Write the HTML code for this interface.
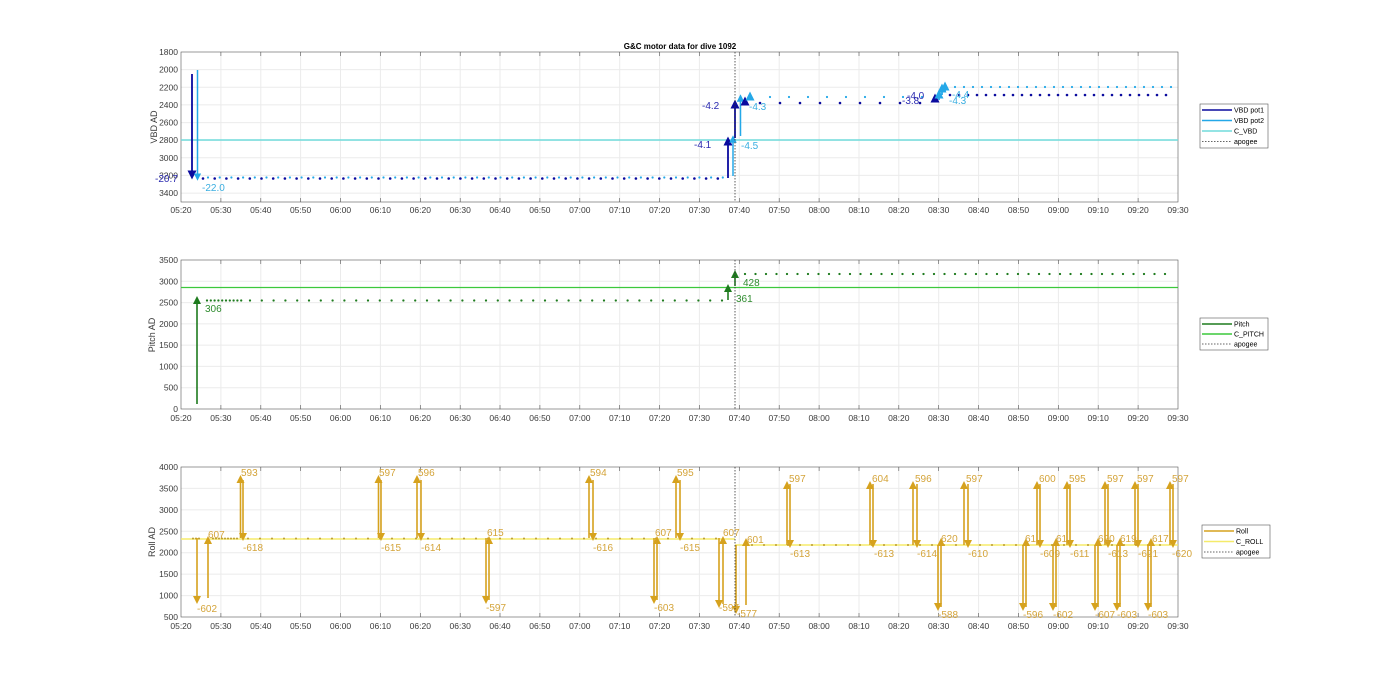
<!DOCTYPE html>
<html><head><meta charset="utf-8"><style>
html,body{margin:0;padding:0;background:#fff;width:1400px;height:693px;overflow:hidden}
svg{display:block;font-family:"Liberation Sans",Arial,sans-serif}
.t{font-size:8.5px;fill:#3a3a3a}
.tx text{text-anchor:middle}
.ty text{text-anchor:end}
.g{stroke:#ebebeb;stroke-width:1;fill:none}
.ax{stroke:#555;stroke-width:0.6;fill:none}
.lg{font-size:7px;fill:#000}
.rl{font-size:10px;fill:#D4A43A}
</style></head><body>
<svg width="1400" height="693" viewBox="0 0 1400 693">
<defs>
<path id="gx" d="M220.9 0V150M260.8 0V150M300.6 0V150M340.5 0V150M380.4 0V150M420.3 0V150M460.2 0V150M500 0V150M539.9 0V150M579.8 0V150M619.7 0V150M659.6 0V150M699.4 0V150M739.3 0V150M779.2 0V150M819.1 0V150M859 0V150M898.8 0V150M938.7 0V150M978.6 0V150M1018.5 0V150M1058.4 0V150M1098.2 0V150M1138.1 0V150"/>
<path id="tk" d="M220.9 0v-4M260.8 0v-4M300.6 0v-4M340.5 0v-4M380.4 0v-4M420.3 0v-4M460.2 0v-4M500 0v-4M539.9 0v-4M579.8 0v-4M619.7 0v-4M659.6 0v-4M699.4 0v-4M739.3 0v-4M779.2 0v-4M819.1 0v-4M859 0v-4M898.8 0v-4M938.7 0v-4M978.6 0v-4M1018.5 0v-4M1058.4 0v-4M1098.2 0v-4M1138.1 0v-4"/>
<marker id="mv1" markerWidth="5" markerHeight="5" refX="2.5" refY="2.5" orient="auto" markerUnits="strokeWidth"><path d="M0 0L5 2.5L0 5z" fill="#0A0A9E"/></marker>
<marker id="mv2" markerWidth="5" markerHeight="5" refX="2.5" refY="2.5" orient="auto" markerUnits="strokeWidth"><path d="M0 0L5 2.5L0 5z" fill="#24A8E8"/></marker>
<marker id="mp" markerWidth="5" markerHeight="5" refX="2.5" refY="2.5" orient="auto" markerUnits="strokeWidth"><path d="M0 0L5 2.5L0 5z" fill="#1E7B1E"/></marker>
<marker id="mr" markerWidth="5" markerHeight="5" refX="2.5" refY="2.5" orient="auto" markerUnits="strokeWidth"><path d="M0 0L5 2.5L0 5z" fill="#D6A21E"/></marker>
</defs>

<text x="680" y="49" text-anchor="middle" style="font-size:8px;font-weight:bold" fill="#000">G&amp;C motor data for dive 1092</text>

<!-- ============ TOP ============ -->
<g transform="translate(0,52)"><use href="#gx" class="g"/></g>
<path class="g" d="M181 69.6H1178M181 87.3H1178M181 104.9H1178M181 122.6H1178M181 140.2H1178M181 157.8H1178M181 175.4H1178M181 193.1H1178"/>
<rect x="181" y="52" width="997" height="150" class="ax"/>
<g transform="translate(0,202)"><use href="#tk" class="ax"/></g>
<g transform="translate(0,52) scale(1,-1)"><use href="#tk" class="ax"/></g>
<g class="t ty"><text x="178" y="55">1800</text><text x="178" y="72.6">2000</text><text x="178" y="90.3">2200</text><text x="178" y="107.9">2400</text><text x="178" y="125.6">2600</text><text x="178" y="143.2">2800</text><text x="178" y="160.8">3000</text><text x="178" y="178.4">3200</text><text x="178" y="196.1">3400</text></g>
<text transform="translate(157,127) rotate(-90)" text-anchor="middle" class="t" style="font-size:9px">VBD AD</text>
<g class="t tx" transform="translate(0,213)"><text x="181">05:20</text><text x="220.9">05:30</text><text x="260.8">05:40</text><text x="300.6">05:50</text><text x="340.5">06:00</text><text x="380.4">06:10</text><text x="420.3">06:20</text><text x="460.2">06:30</text><text x="500">06:40</text><text x="539.9">06:50</text><text x="579.8">07:00</text><text x="619.7">07:10</text><text x="659.6">07:20</text><text x="699.4">07:30</text><text x="739.3">07:40</text><text x="779.2">07:50</text><text x="819.1">08:00</text><text x="859">08:10</text><text x="898.8">08:20</text><text x="938.7">08:30</text><text x="978.6">08:40</text><text x="1018.5">08:50</text><text x="1058.4">09:00</text><text x="1098.2">09:10</text><text x="1138.1">09:20</text><text x="1178">09:30</text></g>
<line x1="181" y1="140" x2="1178" y2="140" stroke="#70DCDC" stroke-width="1.6"/>
<path d="M203 178.5H725" stroke="#0A0A9E" stroke-width="2.6" stroke-linecap="round" stroke-dasharray="0 11.7"/>
<path d="M208 177.5H725" stroke="#24A8E8" stroke-width="2.2" stroke-linecap="round" stroke-dasharray="0 11.7"/>
<path d="M760 103H930" stroke="#0A0A9E" stroke-width="2.6" stroke-linecap="round" stroke-dasharray="0 20"/>
<path d="M770 97H930" stroke="#24A8E8" stroke-width="2.2" stroke-linecap="round" stroke-dasharray="0 19"/>
<path d="M950 95H1170" stroke="#0A0A9E" stroke-width="2.6" stroke-linecap="round" stroke-dasharray="0 9"/>
<path d="M955 87H1175" stroke="#24A8E8" stroke-width="2.2" stroke-linecap="round" stroke-dasharray="0 9"/>
<g fill="none" stroke-width="1.8">
<path d="M192 74V175" stroke="#0A0A9E" marker-end="url(#mv1)"/>
<path d="M197.5 70V177" stroke="#24A8E8" stroke-width="1.5" marker-end="url(#mv2)"/>
<path d="M728 178V141" stroke="#0A0A9E" marker-end="url(#mv1)"/>
<path d="M733 176V139" stroke="#24A8E8" stroke-width="1.5" marker-end="url(#mv2)"/>
<path d="M735 138V104" stroke="#0A0A9E" marker-end="url(#mv1)"/>
<path d="M740.5 136V98" stroke="#24A8E8" stroke-width="1.5" marker-end="url(#mv2)"/>
<path d="M745 104V101" stroke="#0A0A9E" marker-end="url(#mv1)"/>
<path d="M750 99V96" stroke="#24A8E8" marker-end="url(#mv2)"/>
<path d="M935 102V98" stroke="#0A0A9E" marker-end="url(#mv1)"/>
<path d="M939 100V94" stroke="#24A8E8" marker-end="url(#mv2)"/>
<path d="M942 95V88" stroke="#24A8E8" marker-end="url(#mv2)"/>
<path d="M945 92V86" stroke="#24A8E8" marker-end="url(#mv2)"/>
</g>
<g style="font-size:10px">
<text x="155" y="182" fill="#2A2AB0">-20.7</text>
<text x="202" y="191" fill="#3AAEE0">-22.0</text>
<text x="694" y="148" fill="#2A2AB0">-4.1</text>
<text x="741" y="149" fill="#3AAEE0">-4.5</text>
<text x="702" y="109" fill="#2A2AB0">-4.2</text>
<text x="749" y="110" fill="#3AAEE0">-4.3</text>
<text x="902" y="104" fill="#2A2AB0">-3.8</text>
<text x="907" y="99" fill="#2A2AB0">-4.0</text>
<text x="949" y="104" fill="#3AAEE0">-4.3</text>
<text x="952" y="98" fill="#3AAEE0">-4.4</text>
</g>
<line x1="735" y1="52" x2="735" y2="202" stroke="#333" stroke-width="0.8" stroke-dasharray="1.5 1.5"/>
<rect x="1200" y="104" width="68" height="44" fill="#fff" stroke="#555" stroke-width="0.6"/>
<g stroke-width="1.5"><line x1="1202" y1="110" x2="1232" y2="110" stroke="#0A0A9E"/><line x1="1202" y1="120.5" x2="1232" y2="120.5" stroke="#24A8E8"/><line x1="1202" y1="131" x2="1232" y2="131" stroke="#70DCDC"/><line x1="1202" y1="141.5" x2="1232" y2="141.5" stroke="#333" stroke-width="0.8" stroke-dasharray="1.5 1.5"/></g>
<g class="lg"><text x="1234" y="112.5">VBD pot1</text><text x="1234" y="123">VBD pot2</text><text x="1234" y="133.5">C_VBD</text><text x="1234" y="144">apogee</text></g>

<!-- ============ MIDDLE ============ -->
<g transform="translate(0,260)"><use href="#gx" class="g"/></g>
<path class="g" d="M181 387.7H1178M181 366.4H1178M181 345.1H1178M181 323.9H1178M181 302.6H1178M181 281.3H1178"/>
<rect x="181" y="260" width="997" height="149" class="ax"/>
<g transform="translate(0,409)"><use href="#tk" class="ax"/></g>
<g transform="translate(0,260) scale(1,-1)"><use href="#tk" class="ax"/></g>
<g class="t ty"><text x="178" y="412">0</text><text x="178" y="390.7">500</text><text x="178" y="369.4">1000</text><text x="178" y="348.1">1500</text><text x="178" y="326.9">2000</text><text x="178" y="305.6">2500</text><text x="178" y="284.3">3000</text><text x="178" y="263">3500</text></g>
<text transform="translate(155,335) rotate(-90)" text-anchor="middle" class="t" style="font-size:9px">Pitch AD</text>
<g class="t tx" transform="translate(0,421)"><text x="181">05:20</text><text x="220.9">05:30</text><text x="260.8">05:40</text><text x="300.6">05:50</text><text x="340.5">06:00</text><text x="380.4">06:10</text><text x="420.3">06:20</text><text x="460.2">06:30</text><text x="500">06:40</text><text x="539.9">06:50</text><text x="579.8">07:00</text><text x="619.7">07:10</text><text x="659.6">07:20</text><text x="699.4">07:30</text><text x="739.3">07:40</text><text x="779.2">07:50</text><text x="819.1">08:00</text><text x="859">08:10</text><text x="898.8">08:20</text><text x="938.7">08:30</text><text x="978.6">08:40</text><text x="1018.5">08:50</text><text x="1058.4">09:00</text><text x="1098.2">09:10</text><text x="1138.1">09:20</text><text x="1178">09:30</text></g>
<line x1="181" y1="287.5" x2="1178" y2="287.5" stroke="#3CC83C" stroke-width="1.2"/>
<path d="M207 300.5H242" stroke="#1E7B1E" stroke-width="2.3" stroke-linecap="round" stroke-dasharray="0 3.8"/>
<path d="M250 300.5H725" stroke="#1E7B1E" stroke-width="2.3" stroke-linecap="round" stroke-dasharray="0 11.8"/>
<path d="M745 274H1172" stroke="#1E7B1E" stroke-width="2.3" stroke-linecap="round" stroke-dasharray="0 10.5"/>
<g fill="none" stroke="#1E7B1E" stroke-width="1.6">
<path d="M197 404V300" marker-end="url(#mp)"/>
<path d="M728 300V288" marker-end="url(#mp)"/>
<path d="M735 286V274" marker-end="url(#mp)"/>
</g>
<g style="font-size:10px" fill="#2E8B2E"><text x="205" y="312">306</text><text x="736" y="302">361</text><text x="743" y="286">428</text></g>
<line x1="735" y1="260" x2="735" y2="409" stroke="#333" stroke-width="0.8" stroke-dasharray="1.5 1.5"/>
<rect x="1200" y="318" width="68" height="32" fill="#fff" stroke="#555" stroke-width="0.6"/>
<g stroke-width="1.5"><line x1="1202" y1="324" x2="1232" y2="324" stroke="#1E7B1E"/><line x1="1202" y1="334" x2="1232" y2="334" stroke="#3CC83C"/><line x1="1202" y1="344" x2="1232" y2="344" stroke="#333" stroke-width="0.8" stroke-dasharray="1.5 1.5"/></g>
<g class="lg"><text x="1234" y="326.5">Pitch</text><text x="1234" y="336.5">C_PITCH</text><text x="1234" y="346.5">apogee</text></g>

<!-- ============ BOTTOM ============ -->
<g transform="translate(0,467)"><use href="#gx" class="g"/></g>
<path class="g" d="M181 595.6H1178M181 574.1H1178M181 552.7H1178M181 531.3H1178M181 509.9H1178M181 488.4H1178"/>
<rect x="181" y="467" width="997" height="150" class="ax"/>
<g transform="translate(0,617)"><use href="#tk" class="ax"/></g>
<g transform="translate(0,467) scale(1,-1)"><use href="#tk" class="ax"/></g>
<g class="t ty"><text x="178" y="620">500</text><text x="178" y="598.6">1000</text><text x="178" y="577.1">1500</text><text x="178" y="555.7">2000</text><text x="178" y="534.3">2500</text><text x="178" y="512.9">3000</text><text x="178" y="491.4">3500</text><text x="178" y="470">4000</text></g>
<text transform="translate(155,542) rotate(-90)" text-anchor="middle" class="t" style="font-size:9px">Roll AD</text>
<g class="t tx" transform="translate(0,629)"><text x="181">05:20</text><text x="220.9">05:30</text><text x="260.8">05:40</text><text x="300.6">05:50</text><text x="340.5">06:00</text><text x="380.4">06:10</text><text x="420.3">06:20</text><text x="460.2">06:30</text><text x="500">06:40</text><text x="539.9">06:50</text><text x="579.8">07:00</text><text x="619.7">07:10</text><text x="659.6">07:20</text><text x="699.4">07:30</text><text x="739.3">07:40</text><text x="779.2">07:50</text><text x="819.1">08:00</text><text x="859">08:10</text><text x="898.8">08:20</text><text x="938.7">08:30</text><text x="978.6">08:40</text><text x="1018.5">08:50</text><text x="1058.4">09:00</text><text x="1098.2">09:10</text><text x="1138.1">09:20</text><text x="1178">09:30</text></g>
<line x1="181" y1="539" x2="735" y2="539" stroke="#F5EB6A" stroke-width="1.6"/>
<line x1="735" y1="545" x2="1178" y2="545" stroke="#F5EB6A" stroke-width="1.6"/>
<path d="M193 538.5H200M213 538.5H240" stroke="#B8962A" stroke-width="1.9" stroke-linecap="round" stroke-dasharray="0 3"/>
<path d="M248 538.5H725" stroke="#B8962A" stroke-width="1.9" stroke-linecap="round" stroke-dasharray="0 12"/>
<path d="M752 545H1172" stroke="#B8962A" stroke-width="1.9" stroke-linecap="round" stroke-dasharray="0 12"/>
<g fill="none" stroke="#D6A21E" stroke-width="1.6">
<path d="M197 538V600" marker-end="url(#mr)"/><path d="M208 598V540" marker-end="url(#mr)"/>
<path d="M240.5 538V479" marker-end="url(#mr)"/><path d="M243 480V537" marker-end="url(#mr)"/>
<path d="M378.5 538V479" marker-end="url(#mr)"/><path d="M381 480V537" marker-end="url(#mr)"/>
<path d="M417 538V479" marker-end="url(#mr)"/><path d="M421 480V537" marker-end="url(#mr)"/>
<path d="M486 538V600" marker-end="url(#mr)"/><path d="M489 600V540" marker-end="url(#mr)"/>
<path d="M589 538V479" marker-end="url(#mr)"/><path d="M593 480V537" marker-end="url(#mr)"/>
<path d="M654 538V600" marker-end="url(#mr)"/><path d="M657 600V540" marker-end="url(#mr)"/>
<path d="M676 538V479" marker-end="url(#mr)"/><path d="M680 480V537" marker-end="url(#mr)"/>
<path d="M719 538V604" marker-end="url(#mr)"/><path d="M723 604V540" marker-end="url(#mr)"/>
<path d="M736 545V610" marker-end="url(#mr)"/><path d="M746 605V542" marker-end="url(#mr)"/>
<path d="M787 545V485" marker-end="url(#mr)"/><path d="M790 484V544" marker-end="url(#mr)"/>
<path d="M870 545V485" marker-end="url(#mr)"/><path d="M873 484V544" marker-end="url(#mr)"/>
<path d="M913 545V485" marker-end="url(#mr)"/><path d="M917 484V544" marker-end="url(#mr)"/>
<path d="M938 545V607" marker-end="url(#mr)"/><path d="M941 607V542" marker-end="url(#mr)"/>
<path d="M964 545V485" marker-end="url(#mr)"/><path d="M968 484V544" marker-end="url(#mr)"/>
<path d="M1023 545V607" marker-end="url(#mr)"/><path d="M1026 607V542" marker-end="url(#mr)"/>
<path d="M1037 545V485" marker-end="url(#mr)"/><path d="M1040 484V544" marker-end="url(#mr)"/>
<path d="M1053 545V607" marker-end="url(#mr)"/><path d="M1056 607V542" marker-end="url(#mr)"/>
<path d="M1067 545V485" marker-end="url(#mr)"/><path d="M1070 484V544" marker-end="url(#mr)"/>
<path d="M1095 545V607" marker-end="url(#mr)"/><path d="M1098 607V542" marker-end="url(#mr)"/>
<path d="M1105 545V485" marker-end="url(#mr)"/><path d="M1108 484V544" marker-end="url(#mr)"/>
<path d="M1117 545V607" marker-end="url(#mr)"/><path d="M1120 607V542" marker-end="url(#mr)"/>
<path d="M1135 545V485" marker-end="url(#mr)"/><path d="M1138 484V544" marker-end="url(#mr)"/>
<path d="M1148 545V607" marker-end="url(#mr)"/><path d="M1151 607V542" marker-end="url(#mr)"/>
<path d="M1170 545V485" marker-end="url(#mr)"/><path d="M1173 484V544" marker-end="url(#mr)"/>
</g>
<g class="rl">
<text x="197" y="612">-602</text><text x="208" y="538">607</text>
<text x="241" y="476">593</text><text x="243" y="551">-618</text>
<text x="379" y="476">597</text><text x="381" y="551">-615</text>
<text x="418" y="476">596</text><text x="421" y="551">-614</text>
<text x="487" y="536">615</text><text x="486" y="611">-597</text>
<text x="590" y="476">594</text><text x="593" y="551">-616</text>
<text x="655" y="536">607</text><text x="654" y="611">-603</text>
<text x="677" y="476">595</text><text x="680" y="551">-615</text>
<text x="723" y="536">607</text><text x="719" y="611">-597</text>
<text x="747" y="543">601</text><text x="737" y="617">-577</text>
<text x="789" y="482">597</text><text x="790" y="557">-613</text>
<text x="872" y="482">604</text><text x="874" y="557">-613</text>
<text x="915" y="482">596</text><text x="917" y="557">-614</text>
<text x="941" y="542">620</text><text x="938" y="618">-588</text>
<text x="966" y="482">597</text><text x="968" y="557">-610</text>
<text x="1025" y="542">61</text><text x="1023" y="618">-596</text>
<text x="1039" y="482">600</text><text x="1040" y="557">-609</text>
<text x="1056" y="542">61</text><text x="1053" y="618">-602</text>
<text x="1069" y="482">595</text><text x="1070" y="557">-611</text>
<text x="1098" y="542">620</text><text x="1095" y="618">-607</text>
<text x="1107" y="482">597</text><text x="1108" y="557">-613</text>
<text x="1120" y="542">619</text><text x="1117" y="618">-603</text>
<text x="1137" y="482">597</text><text x="1138" y="557">-621</text>
<text x="1152" y="542">617</text><text x="1148" y="618">-603</text>
<text x="1172" y="482">597</text><text x="1172" y="557">-620</text>
</g>
<line x1="735" y1="467" x2="735" y2="617" stroke="#333" stroke-width="0.8" stroke-dasharray="1.5 1.5"/>
<rect x="1202" y="525" width="68" height="33" fill="#fff" stroke="#555" stroke-width="0.6"/>
<g stroke-width="1.5"><line x1="1204" y1="531" x2="1234" y2="531" stroke="#D6A21E"/><line x1="1204" y1="541.5" x2="1234" y2="541.5" stroke="#F5EB6A"/><line x1="1204" y1="552" x2="1234" y2="552" stroke="#333" stroke-width="0.8" stroke-dasharray="1.5 1.5"/></g>
<g class="lg"><text x="1236" y="533.5">Roll</text><text x="1236" y="544">C_ROLL</text><text x="1236" y="554.5">apogee</text></g>
</svg>
</body></html>
